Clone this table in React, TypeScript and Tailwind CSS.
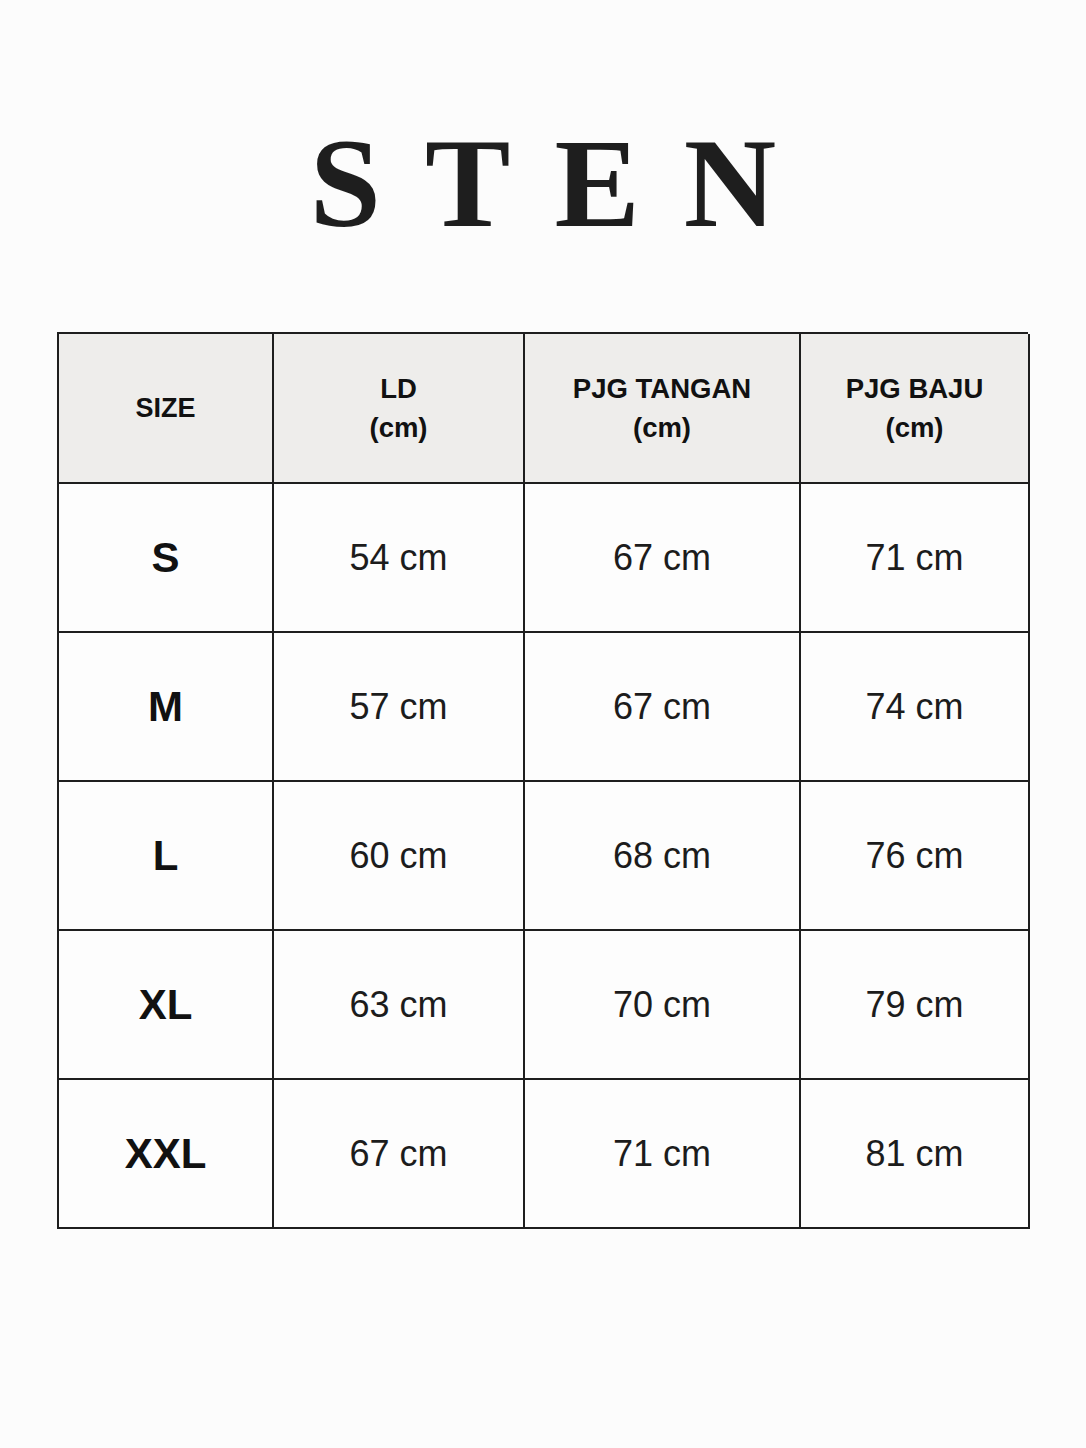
import React from "react";

const rows = [
  ["S", "54 cm", "67 cm", "71 cm"],
  ["M", "57 cm", "67 cm", "74 cm"],
  ["L", "60 cm", "68 cm", "76 cm"],
  ["XL", "63 cm", "70 cm", "79 cm"],
  ["XXL", "67 cm", "71 cm", "81 cm"],
];

export default function App() {
  return (
    <div className="w-[1086px] h-[1448px] bg-[#fcfcfc] pt-[119px]" style={{ fontFamily: '"Liberation Sans", Arial, sans-serif' }}>
      <div
        className="h-[128px] text-[128px] leading-none font-bold text-[#1e1e1e] text-center tracking-[44px] pl-[44px]"
        style={{ fontFamily: '"Liberation Serif", "Times New Roman", serif' }}
      >
        STEN
      </div>
      <div className="mt-[85px] ml-[57px] w-[971px] grid grid-cols-[215px_251px_276px_229px] border-t-2 border-l-2 border-[#1e1e1e]">
        <div className="h-[150px] bg-[#eeedeb] border-r-2 border-b-2 border-[#1e1e1e] flex items-center justify-center text-[27px] font-bold text-[#111]">SIZE</div>
        {["LD", "PJG TANGAN", "PJG BAJU"].map((h) => (
          <div key={h} className="h-[150px] bg-[#eeedeb] border-r-2 border-b-2 border-[#1e1e1e] flex flex-col items-center justify-center text-[27.5px] leading-[39px] font-bold text-[#111]">
            <span>{h}</span>
            <span>(cm)</span>
          </div>
        ))}
        {rows.map((r) => (
          <React.Fragment key={r[0]}>
            <div className="h-[149px] bg-[#fdfdfd] border-r-2 border-b-2 border-[#1e1e1e] flex items-center justify-center text-[42px] font-bold text-[#111]">{r[0]}</div>
            {r.slice(1).map((v, i) => (
              <div key={i} className="h-[149px] bg-[#fdfdfd] border-r-2 border-b-2 border-[#1e1e1e] flex items-center justify-center text-[36px] text-[#1c1c1c]">{v}</div>
            ))}
          </React.Fragment>
        ))}
      </div>
    </div>
  );
}
